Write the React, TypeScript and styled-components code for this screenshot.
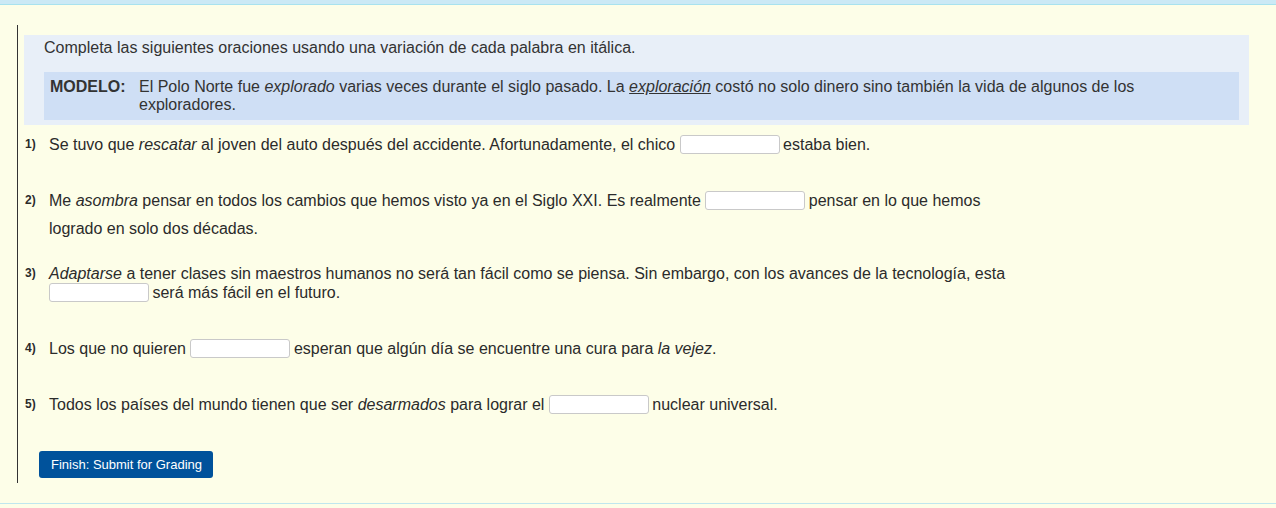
import React from "react";
import styled, { createGlobalStyle } from "styled-components";

const Global = createGlobalStyle`
  html, body {
    margin: 0;
    padding: 0;
    background: #fdfee8;
  }
  body {
    font-family: "Liberation Sans", Arial, Helvetica, sans-serif;
    color: #333;
  }
`;

const Page = styled.div`
  min-height: 508px;
  background: #fdfee8;
`;

const TopBar = styled.div`
  height: 4px;
  background: #cbe9f5;
  border-bottom: 1px solid #a8e2ee;
`;

const Main = styled.main`
  padding: 20px 27px 20px 17px;
  border-bottom: 1px solid #bfe7ee;
`;

const Column = styled.div`
  border-left: 1px solid #333;
  padding: 10px 0 5px 6px;
`;

const Instructions = styled.div`
  background: #e8eff8;
  padding: 5px 10px 5px 20px;
  font-size: 16px;
  line-height: 16px;
`;

const Modelo = styled.div`
  display: flex;
  margin-top: 16px;
  background: #cfdff5;
  padding: 6px;
  line-height: 18px;
`;

const ModeloLabel = styled.strong`
  flex: 0 0 89px;
  font-weight: 700;
`;

const Under = styled.em`
  text-decoration: underline;
`;

const Question = styled.div<{ $gap: number }>`
  display: flex;
  margin-top: ${(p) => p.$gap}px;
  font-size: 16px;
  line-height: 19px;
  color: #2b2b2b;
`;

const Num = styled.span`
  flex: 0 0 25px;
  font-size: 12px;
  font-weight: 700;
  padding-left: 1px;
  box-sizing: border-box;
`;

const Line = styled.div<{ $gap?: number }>`
  margin-top: ${(p) => p.$gap ?? 0}px;
  height: 19px;
  white-space: nowrap;
`;

const Blank = styled.input`
  display: inline-block;
  box-sizing: border-box;
  width: 100px;
  height: 19px;
  margin: 0 -1px 0 0;
  padding: 0 4px;
  vertical-align: top;
  border: 1px solid #c9c9c9;
  border-radius: 3px;
  background: #fff;
  font: inherit;
  font-size: 13px;
`;

const Submit = styled.button`
  display: block;
  margin: 37px 0 0 15px;
  height: 27px;
  padding: 0 11px 0 12px;
  background: #00529b;
  color: #fff;
  border: none;
  border-radius: 3px;
  font-family: "Liberation Sans", Arial, sans-serif;
  font-size: 13px;
  cursor: pointer;
`;

export default function App() {
  return (
    <Page>
      <Global />
      <TopBar />
      <Main>
        <Column>
          <Instructions>
            Completa las siguientes oraciones usando una variación de cada palabra en itálica.
            <Modelo>
              <ModeloLabel>MODELO:</ModeloLabel>
              <span>
                El Polo Norte fue <em>explorado</em> varias veces durante el siglo pasado. La{" "}
                <Under>exploración</Under> costó no solo dinero sino también la vida de algunos de los
                <br />
                exploradores.
              </span>
            </Modelo>
          </Instructions>

          <Question $gap={10}>
            <Num>1)</Num>
            <div>
              <Line>
                Se tuvo que <em>rescatar</em> al joven del auto después del accidente. Afortunadamente, el chico{" "}
                <Blank /> estaba bien.
              </Line>
            </div>
          </Question>

          <Question $gap={37}>
            <Num>2)</Num>
            <div>
              <Line>
                Me <em>asombra</em> pensar en todos los cambios que hemos visto ya en el Siglo XXI. Es realmente{" "}
                <Blank /> pensar en lo que hemos
              </Line>
              <Line $gap={9}>logrado en solo dos décadas.</Line>
            </div>
          </Question>

          <Question $gap={26}>
            <Num>3)</Num>
            <div>
              <Line>
                <em>Adaptarse</em> a tener clases sin maestros humanos no será tan fácil como se piensa. Sin embargo, con
                los avances de la tecnología, esta
              </Line>
              <Line>
                <Blank /> será más fácil en el futuro.
              </Line>
            </div>
          </Question>

          <Question $gap={37}>
            <Num>4)</Num>
            <div>
              <Line>
                Los que no quieren <Blank /> esperan que algún día se encuentre una cura para <em>la vejez</em>.
              </Line>
            </div>
          </Question>

          <Question $gap={37}>
            <Num>5)</Num>
            <div>
              <Line>
                Todos los países del mundo tienen que ser <em>desarmados</em> para lograr el <Blank /> nuclear
                universal.
              </Line>
            </div>
          </Question>

          <Submit>Finish: Submit for Grading</Submit>
        </Column>
      </Main>
    </Page>
  );
}
